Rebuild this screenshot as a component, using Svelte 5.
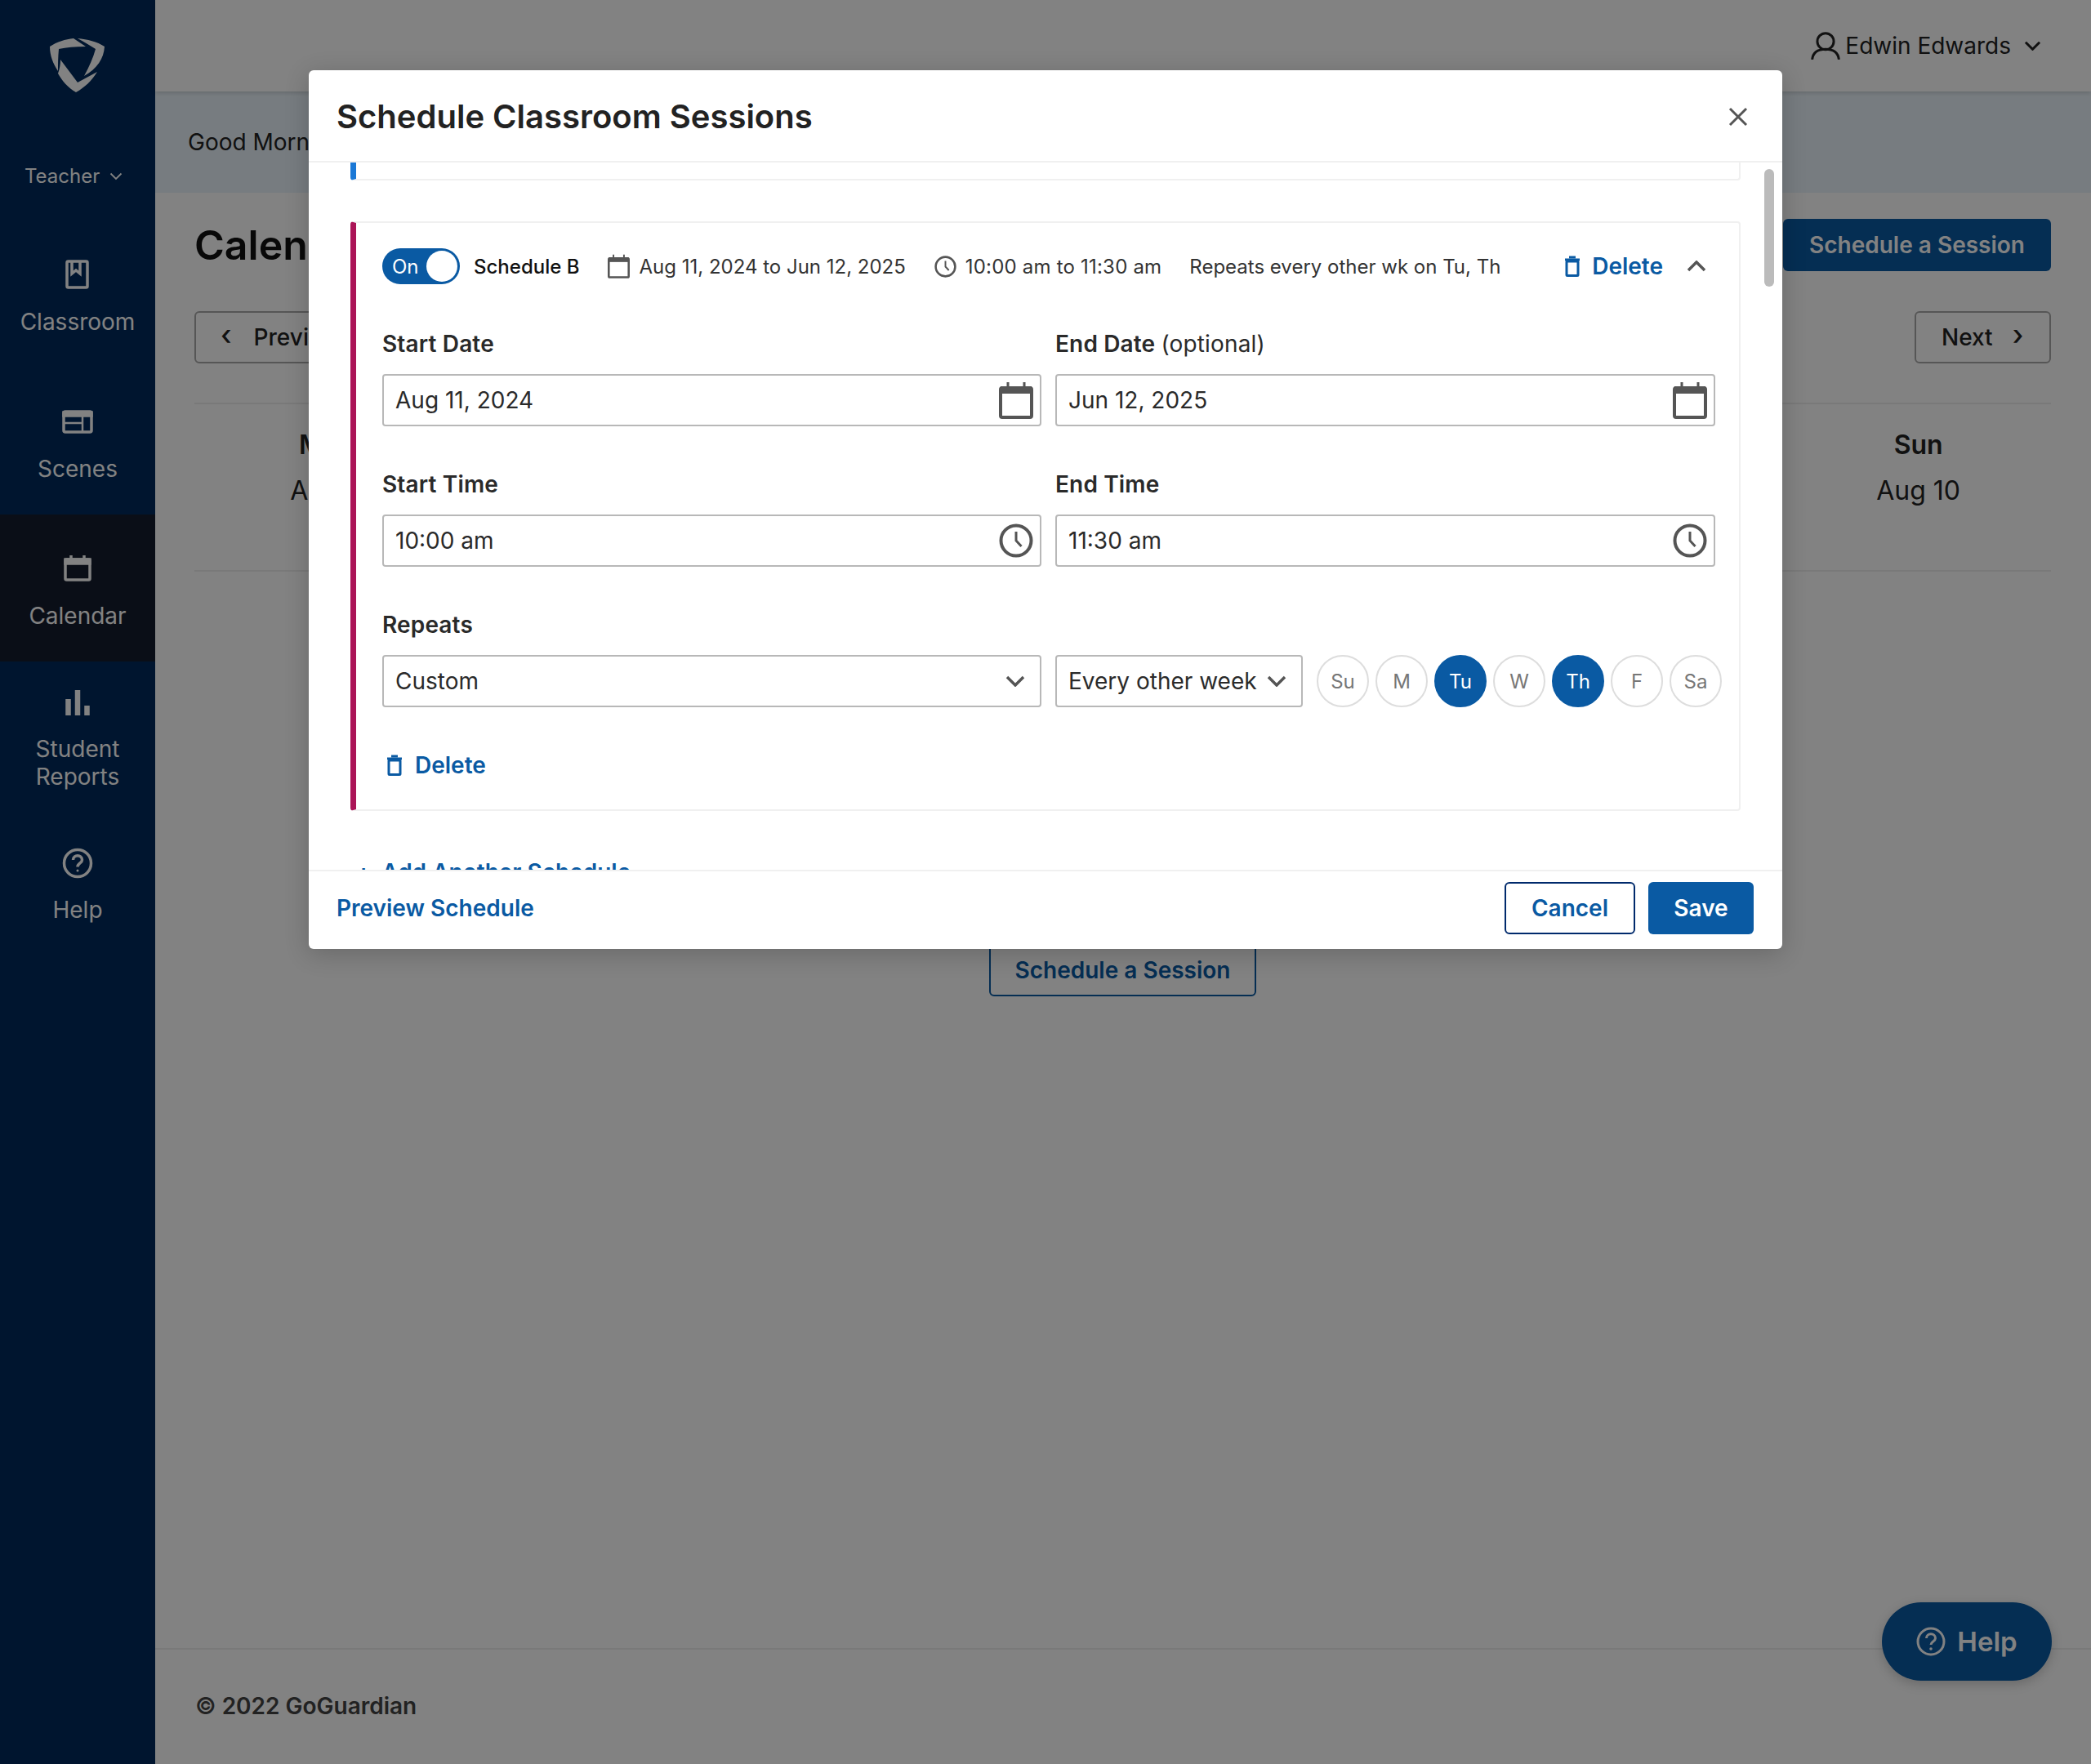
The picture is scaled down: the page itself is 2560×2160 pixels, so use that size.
<script>
  const navItems = [
    { label: ["Classroom"], icon: "book" },
    { label: ["Scenes"], icon: "scenes" },
    { label: ["Calendar"], icon: "calendar", active: true },
    { label: ["Student", "Reports"], icon: "chart" },
    { label: ["Help"], icon: "help" }
  ];
  const weekDays = [
    ["Mon", "Aug 4"],
    ["Tue", "Aug 5"],
    ["Wed", "Aug 6"],
    ["Thu", "Aug 7"],
    ["Fri", "Aug 8"],
    ["Sat", "Aug 9"],
    ["Sun", "Aug 10"]
  ];
  const repeatDays = [
    { label: "Su" },
    { label: "M" },
    { label: "Tu", on: true },
    { label: "W" },
    { label: "Th", on: true },
    { label: "F" },
    { label: "Sa" }
  ];
</script>

{#snippet navIcon(name)}
  <svg class="nav-icon" viewBox="0 0 44 44" fill="none" stroke="currentColor" stroke-width="3.5">
    {#if name === "book"}
      <rect x="9" y="5" width="25" height="32" rx="1.5" />
      <path d="M15 6v14l5-4 5 4V6" />
    {:else if name === "scenes"}
      <rect x="5" y="9" width="34" height="25" rx="2" />
      <path d="M5 10h34v4H5z" fill="currentColor" />
      <path d="M6 23h22M28 13v20" stroke-width="2.5" />
    {:else if name === "calendar"}
      <rect x="7" y="10" width="30" height="25" rx="1.5" />
      <path d="M7 10h30v5H7z" fill="currentColor" />
      <path d="M14 5v5M30 5v5" />
    {:else if name === "chart"}
      <path d="M10.5 18v20M22 7v31M33.5 26v12" stroke-width="6.5" />
    {:else}
      <circle cx="22" cy="22" r="16.5" />
      <path d="M16.5 18c0-7 11-7 11 0 0 4-5.500 4-5.500 8.500" />
      <circle cx="22" cy="31" r="1.500" fill="currentColor" stroke="none" />
    {/if}
  </svg>
{/snippet}

{#snippet calIcon(cls)}
  <svg class={cls} viewBox="0 0 42 46" fill="none" stroke="#555" stroke-width="4">
    <rect x="2" y="8" width="38" height="36" rx="2" />
    <path d="M2 6h38v9H2z" fill="#555" stroke="none" />
    <path d="M11 1v7M31 1v7" stroke-width="3" />
  </svg>
{/snippet}

{#snippet clockIcon(cls)}
  <svg class={cls} viewBox="0 0 42 42" fill="none" stroke="#555" stroke-width="4">
    <circle cx="21" cy="21" r="18.500" />
    <path d="M21 10v11l6.500 7" stroke-width="3" />
  </svg>
{/snippet}

{#snippet trash()}
  <svg class="trash" viewBox="0 0 20 26" fill="none" stroke="currentColor" stroke-width="3">
    <rect x="3" y="7" width="14" height="17.500" rx="1" />
    <path d="M1 5h18" />
    <path d="M6 2h8" />
  </svg>
{/snippet}

{#snippet chevron(cls)}
  <svg class={cls} viewBox="0 0 24 14" fill="none" stroke="currentColor" stroke-width="3.500">
    <path d="M2 2l10 10L22 2" />
  </svg>
{/snippet}

<div class="page">
  <aside class="sidebar">
    <div class="logo">
      <svg viewBox="0 0 68 68">
        <path d="M0 11C9 5 19 2 29 1l15 10C31 11 20 12 11 14c-1 10-1 19-1 27C4 32 0 22 0 11z" />
        <path d="M34 1c12 1 24 4 33 10-1 15-9 27-25 36 6-11 11-22 14-33-7-4-14-9-22-13z" />
        <path d="M13 27l21 28 24-13c-7 11-15 19-26 25-10-6-17-14-22-23 2-6 3-11 3-17z" />
      </svg>
    </div>
    <div class="role">Teacher
      <svg viewBox="0 0 16 10" fill="none" stroke-width="1.800"><path d="M1.500 1.500L8 8l6.500-6.500" /></svg>
    </div>
    <nav>
      {#each navItems as item}
        <div class="nav-item" class:active={item.active}>
          {@render navIcon(item.icon)}
          <div class="nav-label">
            {#each item.label as line}<div>{line}</div>{/each}
          </div>
        </div>
      {/each}
    </nav>
  </aside>

  <div class="main">
    <header class="topbar">
      <svg class="user" viewBox="0 0 34 34" fill="none" stroke="#222" stroke-width="2.800">
        <circle cx="17" cy="12" r="9.500" />
        <path d="M1.500 33c1-9 7-12 15.500-12s14.500 3 15.500 12" />
      </svg>
      <span class="user-name">Edwin Edwards</span>
      {@render chevron("user-chev")}
    </header>
    <div class="greeting">Good Morning, Edwin</div>

    <section class="content">
      <div class="title-row">
        <h1>Calendar</h1>
        <button class="btn-solid wide">Schedule a Session</button>
      </div>
      <div class="week-nav">
        <button class="btn-ghost prev"><span class="caret">‹</span>Previous</button>
        <button class="btn-ghost next">Next<span class="caret">›</span></button>
      </div>
      <div class="week-head">
        {#each weekDays as [day, date]}
          <div class="week-day"><strong>{day}</strong><span>{date}</span></div>
        {/each}
      </div>
      <div class="empty">
        <button class="btn-outline">Schedule a Session</button>
      </div>
    </section>

    <footer class="page-foot">© 2022 GoGuardian</footer>
  </div>

  <button class="fab">
    <svg viewBox="0 0 36 36" fill="none" stroke="#fff" stroke-width="3">
      <circle cx="18" cy="18" r="16" />
      <path d="M12.500 14c0-7 11-7 11 0 0 4-5.500 4-5.500 8" />
      <circle cx="18" cy="27" r="1.800" fill="#fff" stroke="none" />
    </svg>
    Help
  </button>

  <div class="overlay">
    <div class="modal">
      <div class="modal-head">
        <h2>Schedule Classroom Sessions</h2>
        <svg class="close" viewBox="0 0 24 24" fill="none" stroke="#555" stroke-width="3">
          <path d="M2 2l20 20M22 2L2 22" />
        </svg>
      </div>

      <div class="modal-body">
        <div class="card card-a"></div>

        <div class="card card-b">
          <div class="summary">
            <div class="toggle"><span>On</span><i></i></div>
            <span class="sched-name">Schedule B</span>
            {@render calIcon("sum-cal")}
            <span class="sum-dates">Aug 11, 2024 to Jun 12, 2025</span>
            {@render clockIcon("sum-clock")}
            <span class="sum-times">10:00 am to 11:30 am</span>
            <span class="sum-repeat">Repeats every other wk on Tu, Th</span>
            <span class="link del-top">{@render trash()}Delete</span>
            <svg class="collapse" viewBox="0 0 24 14" fill="none" stroke="#555" stroke-width="3.500"><path d="M2 12L12 2l10 10" /></svg>
          </div>

          <div class="fields">
            <div class="field">
              <span class="label">Start Date</span>
              <div class="input">Aug 11, 2024{@render calIcon("in-icon")}</div>
            </div>
            <div class="field">
              <span class="label">End Date <em>(optional)</em></span>
              <div class="input">Jun 12, 2025{@render calIcon("in-icon")}</div>
            </div>
            <div class="field">
              <span class="label">Start Time</span>
              <div class="input">10:00 am{@render clockIcon("in-clock")}</div>
            </div>
            <div class="field">
              <span class="label">End Time</span>
              <div class="input">11:30 am{@render clockIcon("in-clock")}</div>
            </div>
          </div>

          <div class="repeat-field">
            <span class="label">Repeats</span>
            <div class="repeat-row">
              <div class="input custom">Custom{@render chevron("sel-chev")}</div>
              <div class="input every">Every other week{@render chevron("sel-chev")}</div>
              <div class="days">
                {#each repeatDays as d}
                  <span class="day" class:on={d.on}>{d.label}</span>
                {/each}
              </div>
            </div>
          </div>

          <div class="link del-bottom">{@render trash()}Delete</div>
        </div>

        <div class="link add-another"><span class="plus">+</span>Add Another Schedule</div>
        <div class="scrollbar"></div>
      </div>

      <div class="modal-foot">
        <span class="link preview">Preview Schedule</span>
        <button class="btn-cancel">Cancel</button>
        <button class="btn-save">Save</button>
      </div>
    </div>
  </div>
</div>

<style>
  :global(body) {
    margin: 0;
    font-family: Inter, "Liberation Sans", sans-serif;
    color: #222;
  }

  .page {
    position: relative;
    display: flex;
    width: 2560px;
    height: 2160px;
    overflow: hidden;
    background: #fff;
    font-size: 28px;
  }

  button {
    font: inherit;
    box-sizing: border-box;
    cursor: pointer;
  }

  /* sidebar */
  .sidebar {
    flex: 0 0 190px;
    background: #002a5c;
    color: #fff;
  }
  .logo {
    height: 160px;
    display: flex;
    justify-content: center;
    padding-top: 46px;
    box-sizing: border-box;
  }
  .logo svg {
    width: 68px;
    height: 68px;
  }
  .logo path {
    fill: #fff;
  }
  .role {
    height: 110px;
    padding: 39px 0 0 30px;
    box-sizing: border-box;
    font-size: 24px;
    line-height: 34px;
  }
  .role svg {
    width: 16px;
    height: 10px;
    margin-left: 5px;
    vertical-align: 3px;
  }
  .role svg path {
    stroke: #fff;
  }
  .nav-item {
    height: 180px;
    box-sizing: border-box;
    padding-top: 6px;
    display: flex;
    flex-direction: column;
    align-items: center;
    justify-content: center;
    gap: 18px;
  }
  .nav-item.active {
    background: #141c2e;
  }
  .nav-icon {
    width: 44px;
    height: 44px;
  }
  .nav-label {
    text-align: center;
    line-height: 34px;
  }

  /* page */
  .main {
    flex: 1;
    display: flex;
    flex-direction: column;
    min-width: 0;
  }
  .topbar {
    height: 112px;
    flex: none;
    position: relative;
    box-sizing: border-box;
    display: flex;
    align-items: center;
    justify-content: flex-end;
    padding: 0 61px 0 0;
    box-shadow: 0 1px 6px rgba(0, 0, 0, 0.2);
  }
  .user {
    width: 36px;
    height: 36px;
    margin-right: 6px;
  }
  .user-chev {
    width: 21px;
    height: 12px;
    margin-left: 16px;
    color: #222;
  }
  .greeting {
    height: 124px;
    flex: none;
    background: #eaf4fb;
    padding-left: 40px;
    line-height: 124px;
    box-sizing: border-box;
  }
  .content {
    padding: 32px 49px 0 48px;
    flex: 1;
  }
  .title-row {
    display: flex;
    justify-content: space-between;
    align-items: center;
  }
  h1 {
    margin: 0;
    font-size: 50px;
    font-weight: 600;
    color: #111;
  }
  .btn-solid {
    background: #0a5aa3;
    border: 0;
    border-radius: 6px;
    color: #fff;
    font-weight: 600;
    height: 64px;
    width: 328px;
  }
  .week-nav {
    display: flex;
    justify-content: space-between;
    margin-top: 49px;
  }
  .btn-ghost {
    height: 64px;
    background: #fff;
    border: 2px solid #aaa;
    border-radius: 6px;
    color: #222;
    font-weight: 500;
    display: flex;
    align-items: center;
  }
  .prev {
    width: 230px;
    padding-left: 30px;
    gap: 27px;
  }
  .next {
    width: 167px;
    padding-left: 31px;
    gap: 24px;
  }
  .caret {
    font-size: 34px;
    line-height: 1;
    position: relative;
    top: -3px;
  }
  .week-head {
    margin-top: 48px;
    height: 207px;
    display: grid;
    grid-template-columns: repeat(7, 1fr);
    border-top: 2px solid #eee;
    border-bottom: 2px solid #eee;
    box-sizing: border-box;
  }
  .week-day {
    display: flex;
    flex-direction: column;
    align-items: center;
    padding-top: 31px;
    font-size: 32px;
    gap: 18px;
    line-height: 38px;
  }
  .week-day strong {
    font-weight: 600;
  }
  .empty {
    display: flex;
    justify-content: center;
    margin-top: 456px;
  }
  .btn-outline {
    width: 327px;
    height: 64px;
    background: #fff;
    border: 2px solid #0a5aa3;
    border-radius: 6px;
    color: #0a5aa3;
    font-weight: 600;
  }
  .page-foot {
    flex: none;
    height: 142px;
    margin: 0;
    padding: 52px 0 0 49px;
    box-sizing: border-box;
    border-top: 2px solid #eee;
    font-weight: 600;
    color: #444;
  }
  .fab {
    position: absolute;
    left: 2304px;
    top: 1962px;
    width: 208px;
    height: 96px;
    border: 0;
    border-radius: 48px;
    background: #0a5aa3;
    color: #fff;
    font-size: 33px;
    font-weight: 600;
    display: flex;
    align-items: center;
    justify-content: center;
    gap: 14px;
    padding-left: 6px;
    box-shadow: 0 4px 14px rgba(0, 0, 0, 0.2);
  }
  .fab svg {
    width: 36px;
    height: 36px;
  }

  /* modal */
  .overlay {
    position: absolute;
    inset: 0;
    background: rgba(0, 0, 0, 0.49);
  }
  .modal {
    position: absolute;
    left: 378px;
    top: 86px;
    width: 1804px;
    height: 1076px;
    background: #fff;
    border-radius: 6px;
    box-shadow: 0 6px 30px rgba(0, 0, 0, 0.2);
    display: flex;
    flex-direction: column;
    overflow: hidden;
  }
  .modal-head {
    flex: 0 0 113px;
    box-sizing: border-box;
    border-bottom: 2px solid #f0f0f0;
    display: flex;
    align-items: center;
    justify-content: space-between;
    padding: 2px 42px 0 34px;
  }
  h2 {
    margin: 0;
    font-size: 40px;
    font-weight: 600;
    color: #222;
  }
  .close {
    width: 24px;
    height: 24px;
  }
  .modal-body {
    flex: 1;
    position: relative;
    overflow: hidden;
    padding: 0 51px 0 51px;
  }
  .card {
    box-sizing: border-box;
    border: 2px solid #f0f0f0;
    border-radius: 4px;
  }
  .card-a {
    height: 22px;
    border-top: 0;
    border-left: 7px solid #1a78d6;
    border-radius: 0 0 4px 4px;
  }
  .card-b {
    height: 722px;
    margin-top: 50px;
    border-left: 7px solid #ab1457;
    padding: 31px 0 0 32px;
  }
  .summary {
    display: flex;
    align-items: center;
    height: 44px;
    font-size: 24px;
    color: #333;
  }
  .toggle {
    width: 95px;
    height: 44px;
    border-radius: 22px;
    background: #0a5aa3;
    color: #fff;
    font-size: 24px;
    display: flex;
    align-items: center;
    justify-content: space-between;
    padding: 0 3px 0 12px;
    box-sizing: border-box;
  }
  .toggle i {
    width: 38px;
    height: 38px;
    background: #fff;
    border-radius: 50%;
  }
  .sched-name {
    margin-left: 17px;
    font-weight: 500;
    font-size: 24px;
    color: #111;
  }
  .sum-cal {
    width: 27px;
    height: 30px;
    margin-left: 35px;
  }
  .sum-dates {
    margin-left: 11px;
  }
  .sum-clock {
    width: 27px;
    height: 27px;
    margin-left: 35px;
  }
  .sum-times {
    margin-left: 11px;
    letter-spacing: 0.2px;
  }
  .sum-repeat {
    margin-left: 34px;
  }
  .link {
    color: #0a5aa3;
    font-weight: 600;
  }
  .del-top {
    margin-left: auto;
    font-size: 28px;
    display: flex;
    align-items: center;
    gap: 14px;
  }
  .trash {
    width: 20px;
    height: 26px;
  }
  .collapse {
    width: 24px;
    height: 14px;
    margin: 0 40px 0 29px;
  }
  .fields {
    display: grid;
    grid-template-columns: 807px 808px;
    column-gap: 17px;
    row-gap: 52px;
    margin-top: 54px;
  }
  .label {
    display: block;
    font-weight: 600;
    line-height: 34px;
    margin: 2px 0 20px;
    color: #2a2a2a;
    letter-spacing: 0.15px;
  }
  .label em {
    font-style: normal;
    font-weight: 400;
  }
  .input {
    box-sizing: border-box;
    height: 64px;
    border: 2px solid #b8b8b8;
    border-radius: 4px;
    display: flex;
    align-items: center;
    justify-content: space-between;
    padding: 0 8px 0 14px;
    font-size: 28px;
    color: #2a2a2a;
  }
  .in-icon {
    width: 42px;
    height: 46px;
  }
  .in-clock {
    width: 42px;
    height: 42px;
  }
  .repeat-field {
    margin-top: 54px;
  }
  .repeat-row {
    display: flex;
    gap: 17px;
  }
  .custom {
    width: 807px;
  }
  .every {
    width: 303px;
  }
  .sel-chev {
    width: 24px;
    height: 14px;
    color: #555;
    margin-right: 10px;
  }
  .days {
    display: flex;
    gap: 8px;
  }
  .day {
    width: 64px;
    height: 64px;
    box-sizing: border-box;
    border: 2px solid #ddd;
    border-radius: 50%;
    display: flex;
    align-items: center;
    justify-content: center;
    font-size: 24px;
    color: #777;
  }
  .day.on {
    background: #0a5aa3;
    border-color: #0a5aa3;
    color: #fff;
  }
  .del-bottom {
    margin: 54px 0 0 5px;
    display: flex;
    align-items: center;
    gap: 15px;
    line-height: 34px;
  }
  .add-another {
    margin: 58px 0 0 0;
    padding-left: 6px;
    line-height: 34px;
    display: flex;
    gap: 12px;
  }
  .plus {
    font-size: 30px;
  }
  .scrollbar {
    position: absolute;
    top: 8px;
    left: 1782px;
    width: 12px;
    height: 144px;
    border-radius: 6px;
    background: #bbb;
  }
  .modal-foot {
    flex: 0 0 97px;
    box-sizing: border-box;
    border-top: 2px solid #f0f0f0;
    display: flex;
    align-items: center;
    padding: 0 35px 6px 34px;
    gap: 16px;
  }
  .preview {
    margin-right: auto;
  }
  .btn-cancel {
    width: 160px;
    height: 64px;
    border: 2px solid #002a6c;
    border-radius: 6px;
    background: #fff;
    color: #0a5aa3;
    font-weight: 600;
  }
  .btn-save {
    width: 129px;
    height: 64px;
    border: 0;
    border-radius: 6px;
    background: #0a5aa3;
    color: #fff;
    font-weight: 600;
  }
</style>
